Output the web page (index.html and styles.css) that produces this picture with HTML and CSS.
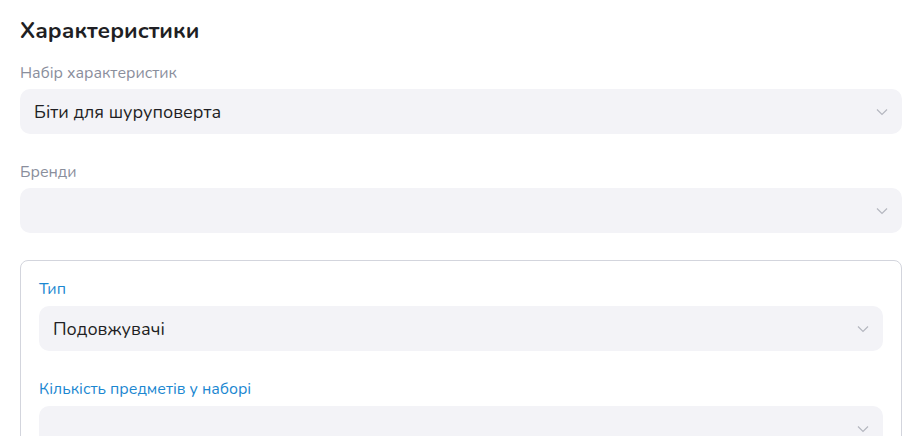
FILE: index.html
```html
<!DOCTYPE html>
<html lang="uk">
<head>
    <meta charset="UTF-8">
    <meta name="viewport" content="width=device-width, initial-scale=1.0">
    <title>Характеристики</title>
    <link rel="stylesheet" href="styles.css">
</head>
<body>
    <div class="specs">
        <h2>Характеристики</h2>

        <div class="field">
            <label class="field-label">Набір характеристик</label>
            <div class="select">
                <span class="select-value">Біти для шуруповерта</span>
                <svg class="chevron" viewBox="0 0 12 8"><path d="M1 1.5l5 5 5-5"/></svg>
            </div>
        </div>

        <div class="field">
            <label class="field-label">Бренди</label>
            <div class="select">
                <span class="select-value"></span>
                <svg class="chevron" viewBox="0 0 12 8"><path d="M1 1.5l5 5 5-5"/></svg>
            </div>
        </div>

        <div class="group">
            <div class="field">
                <label class="field-label accent">Тип</label>
                <div class="select">
                    <span class="select-value">Подовжувачі</span>
                    <svg class="chevron" viewBox="0 0 12 8"><path d="M1 1.5l5 5 5-5"/></svg>
                </div>
            </div>
            <div class="field">
                <label class="field-label accent">Кількість предметів у наборі</label>
                <div class="select">
                    <span class="select-value"></span>
                    <svg class="chevron" viewBox="0 0 12 8"><path d="M1 1.5l5 5 5-5"/></svg>
                </div>
            </div>
        </div>
    </div>
</body>
</html>
```

FILE: styles.css
```css
body {
    margin: 0;
    font-family: "Nunito", "Open Sans", sans-serif;
    color: #1f1f24;
    background: #fff;
}
.specs {
    padding: 14px 20px 0 20px;
}
h2 {
    margin: 0 0 15px;
    font-size: 22.6px;
    line-height: 34px;
    font-weight: 700;
}
.field {
    margin-bottom: 28px;
}
.field-label {
    display: block;
    font-size: 15.9px;
    line-height: 20px;
    color: #8a8e9c;
    margin-bottom: 6px;
}
.field-label.accent {
    color: #1b87d1;
}
.group .field-label {
    margin-bottom: 7px;
}
.select {
    display: flex;
    align-items: center;
    justify-content: space-between;
    height: 45px;
    padding: 0 14px;
    background-color: #f3f3f7;
    border-radius: 10px;
    box-sizing: border-box;
}
.select-value {
    font-size: 18px;
}
.chevron {
    width: 12px;
    height: 8px;
    fill: none;
    stroke: #b5b7c0;
    stroke-width: 1.2;
}
.group {
    border: 1px solid #d3d5dd;
    border-radius: 8px;
    padding: 18px 18px 0 18px;
    margin-top: -1px;
}
```
